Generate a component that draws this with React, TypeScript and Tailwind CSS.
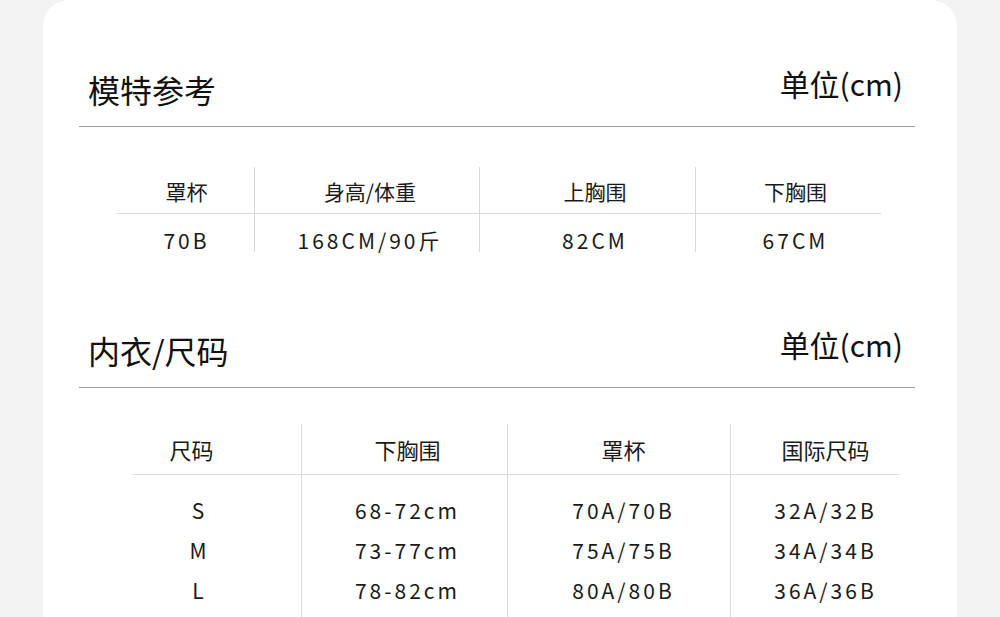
const font = { fontFamily: '"Noto Sans CJK SC", "Noto Sans", sans-serif' };

function SectionHeader({ title }: { title: string }) {
  return (
    <div className="ml-[36px] mr-[42px] flex h-[127px] items-end justify-between border-b border-[#9c9c9c]">
      <span className="pb-[21px] pl-[9px] text-[32px] leading-none text-[#111]">{title}</span>
      <span className="pb-[28px] pr-[12px] text-[30px] leading-none text-[#111]">单位(cm)</span>
    </div>
  );
}

const modelCols = [
  { w: 'w-[138px]', pl: 'pl-[3px]', line: false },
  { w: 'w-[225px]', pl: 'pl-[6px]', line: true },
  { w: 'w-[216px]', pl: 'pl-[15px]', line: true },
  { w: 'w-[186px]', pl: 'pl-[14px]', line: true },
];

const modelHead = ['罩杯', '身高/体重', '上胸围', '下胸围'];
const modelRow = ['70B', '168CM/90斤', '82CM', '67CM'];

const sizeHead = ['尺码', '下胸围', '罩杯', '国际尺码'];
const sizeRows = [
  ['S', '68-72cm', '70A/70B', '32A/32B'],
  ['M', '73-77cm', '75A/75B', '34A/34B'],
  ['L', '78-82cm', '80A/80B', '36A/36B'],
];

const sizeCols = [
  { w: 'w-[169px]', headPad: 'pr-[50px]', bodyPad: 'pr-[34px]', line: false },
  { w: 'w-[206px]', headPad: 'pl-[6px]', bodyPad: 'pl-[6px]', line: true },
  { w: 'w-[223px]', headPad: 'pl-[9px]', bodyPad: 'pl-[9px]', line: true },
  { w: 'w-[170px]', headPad: 'pl-[20px]', bodyPad: 'pl-[20px]', line: true },
];

export default function App() {
  return (
    <div className="h-[617px] w-[1000px] overflow-hidden bg-[#f3f3f3]" style={font}>
      <div className="ml-[43px] h-full w-[914px] rounded-t-[26px] bg-white">
        <SectionHeader title="模特参考" />

        {/* model table */}
        <div className="ml-[73px] mt-[40px] flex">
          {modelCols.map((c, i) => (
            <div key={i} className={`${c.w} flex flex-col ${c.line ? 'border-l border-[#d9d9d9]' : ''}`}>
              <div className={`flex h-[47px] items-center justify-center border-b border-[#d9d9d9] pt-[3px] text-[21px] leading-none text-[#1a1a1a] ${c.pl}`}>
                {modelHead[i]}
              </div>
              <div className={`flex h-[38px] items-center justify-center pt-[14px] text-[21px] leading-none tracking-[3px] text-[#1a1a1a] ${c.pl}`}>
                {modelRow[i]}
              </div>
            </div>
          ))}
        </div>

        <div className="mt-[9px]">
          <SectionHeader title="内衣/尺码" />
        </div>

        {/* size table */}
        <div className="ml-[89px] mt-[36px] flex">
          {sizeCols.map((c, i) => (
            <div key={i} className={`${c.w} flex flex-col ${c.line ? 'border-l border-[#d9d9d9]' : ''}`}>
              <div className={`flex h-[51px] items-center justify-center border-b border-[#d9d9d9] text-[22px] leading-none text-[#1a1a1a] ${c.headPad}`}>
                {sizeHead[i]}
              </div>
              <div className="flex flex-col pb-[30px] pt-[15px]">
                {sizeRows.map((r, j) => (
                  <div key={j} className={`flex h-[40px] items-center justify-center text-[21px] leading-none tracking-[3px] text-[#1a1a1a] ${c.bodyPad}`}>
                    {r[i]}
                  </div>
                ))}
              </div>
            </div>
          ))}
        </div>
      </div>
    </div>
  );
}
